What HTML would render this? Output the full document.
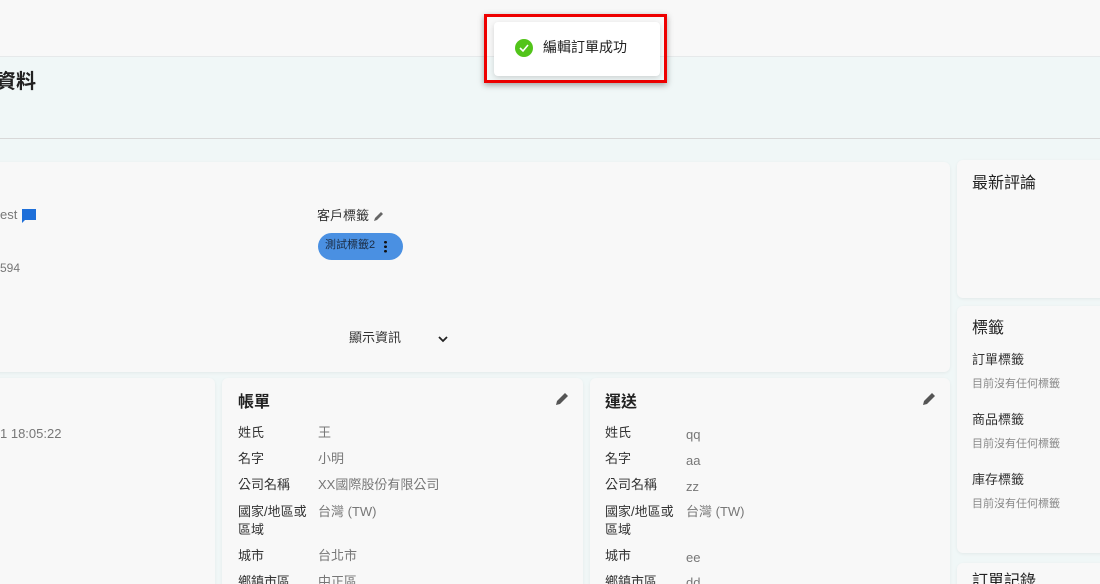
<!DOCTYPE html>
<html><head><meta charset="utf-8"><style>
*{margin:0;padding:0;box-sizing:border-box}
html,body{width:1100px;height:584px;overflow:hidden}
body{background:#f0f7f7;font-family:"Liberation Sans","Noto Sans CJK TC",sans-serif;color:#222;position:relative}
.a{position:absolute}
.card{position:absolute;background:#f8f8f8;border-radius:6px;box-shadow:0 1px 3px rgba(0,0,0,.06)}
.t{font-size:13px;color:#333;line-height:16px}
.g{font-size:13px;color:#777;line-height:16px}
.s{font-size:11px;color:#888;line-height:14px}
h3{font-size:16px;font-weight:bold;color:#222;line-height:20px}
</style></head><body>
<div class="a" style="left:0;top:0;width:1100px;height:57px;background:#f8f8f8;border-bottom:1px solid #e6e9ea"></div>
<div class="a" style="left:-4px;top:70px;font-size:20px;line-height:24px;font-weight:bold;color:#222">資料</div>
<div class="a" style="left:0;top:138px;width:1100px;height:1px;background:#d8d8d8"></div>

<div class="card" style="left:-10px;top:162px;width:960px;height:210px"></div>
<div class="a g" style="left:0;top:207px">est</div>
<svg class="a" style="left:21px;top:208px" width="16" height="16" viewBox="0 0 16 16"><path d="M1 1h14v11H4l-3 3z" fill="#1e6fd9"/></svg>
<div class="a g" style="left:0;top:260px;font-size:12px">594</div>
<div class="a t" style="left:317px;top:208px">客戶標籤</div>
<svg class="a" style="left:373px;top:211px" width="11" height="11" viewBox="0 0 11 11"><path d="M1 10l1-3 6-6 2 2-6 6z" fill="#666"/></svg>
<div class="a" style="left:318px;top:233px;width:85px;height:27px;border-radius:14px;background:#4a90e2;font-size:11px;line-height:14px;color:#1a2a40;padding:5px 0 0 7px">測試標籤2</div>
<div class="a" style="left:384px;top:240px;width:3px;height:13px;background:radial-gradient(circle,#111 1.3px,transparent 1.5px) 0 0/3px 4.5px"></div>
<div class="a t" style="left:349px;top:330px">顯示資訊</div>
<svg class="a" style="left:437px;top:334px" width="12" height="10" viewBox="0 0 12 10"><path d="M2 3l4 4 4-4" stroke="#222" stroke-width="1.8" fill="none"/></svg>

<div class="card" style="left:-10px;top:378px;width:225px;height:220px"></div>
<div class="a g" style="left:0;top:426px">1 18:05:22</div>

<div class="card" style="left:222px;top:378px;width:361px;height:220px"></div>
<h3 class="a" style="left:238px;top:393px">帳單</h3>
<svg class="a" style="left:555px;top:392px" width="14" height="14" viewBox="0 0 14 14"><path d="M1 13l1-4 8-8 3 3-8 8z" fill="#555"/></svg>
<div class="a t" style="left:238px;top:425px">姓氏</div><div class="a g" style="left:318px;top:425px">王</div>
<div class="a t" style="left:238px;top:451px">名字</div><div class="a g" style="left:318px;top:451px">小明</div>
<div class="a t" style="left:238px;top:477px">公司名稱</div><div class="a g" style="left:318px;top:477px">XX國際股份有限公司</div>
<div class="a t" style="left:238px;top:503px;line-height:18px">國家/地區或<br>區域</div><div class="a g" style="left:318px;top:504px">台灣 (TW)</div>
<div class="a t" style="left:238px;top:548px">城市</div><div class="a g" style="left:318px;top:548px">台北市</div>
<div class="a t" style="left:238px;top:574px">鄉鎮市區</div><div class="a g" style="left:318px;top:574px">中正區</div>

<div class="card" style="left:590px;top:378px;width:360px;height:220px"></div>
<h3 class="a" style="left:605px;top:393px">運送</h3>
<svg class="a" style="left:922px;top:392px" width="14" height="14" viewBox="0 0 14 14"><path d="M1 13l1-4 8-8 3 3-8 8z" fill="#555"/></svg>
<div class="a t" style="left:605px;top:425px">姓氏</div><div class="a g" style="left:686px;top:427px">qq</div>
<div class="a t" style="left:605px;top:451px">名字</div><div class="a g" style="left:686px;top:453px">aa</div>
<div class="a t" style="left:605px;top:477px">公司名稱</div><div class="a g" style="left:686px;top:479px">zz</div>
<div class="a t" style="left:605px;top:503px;line-height:18px">國家/地區或<br>區域</div><div class="a g" style="left:686px;top:504px">台灣 (TW)</div>
<div class="a t" style="left:605px;top:548px">城市</div><div class="a g" style="left:686px;top:550px">ee</div>
<div class="a t" style="left:605px;top:574px">鄉鎮市區</div><div class="a g" style="left:686px;top:575px">dd</div>

<div class="card" style="left:957px;top:160px;width:160px;height:138px"></div>
<h3 class="a" style="left:972px;top:174px;font-weight:normal;color:#222">最新評論</h3>
<div class="card" style="left:957px;top:306px;width:160px;height:247px"></div>
<h3 class="a" style="left:972px;top:319px;font-weight:normal">標籤</h3>
<div class="a t" style="left:972px;top:352px">訂單標籤</div><div class="a s" style="left:972px;top:377px">目前沒有任何標籤</div>
<div class="a t" style="left:972px;top:412px">商品標籤</div><div class="a s" style="left:972px;top:437px">目前沒有任何標籤</div>
<div class="a t" style="left:972px;top:472px">庫存標籤</div><div class="a s" style="left:972px;top:497px">目前沒有任何標籤</div>
<div class="card" style="left:957px;top:563px;width:160px;height:40px"></div>
<h3 class="a" style="left:972px;top:572px;font-weight:normal">訂單記錄</h3>

<div class="a" style="left:484px;top:14px;width:183px;height:69px;border:3px solid #e00;box-shadow:0 2px 6px rgba(0,0,0,.35)"></div>
<div class="a" style="left:494px;top:22px;width:166px;height:54px;background:#fff;border-radius:4px;box-shadow:0 2px 6px rgba(0,0,0,.15)"></div>
<svg class="a" style="left:515px;top:39px" width="18" height="18" viewBox="0 0 18 18"><circle cx="9" cy="9" r="9" fill="#52c41a"/><path d="M5 9l3 3 5-6" stroke="#fff" stroke-width="1.6" fill="none"/></svg>
<div class="a" style="left:543px;top:38px;font-size:14px;line-height:18px;color:#222">編輯訂單成功</div>
</body></html>
